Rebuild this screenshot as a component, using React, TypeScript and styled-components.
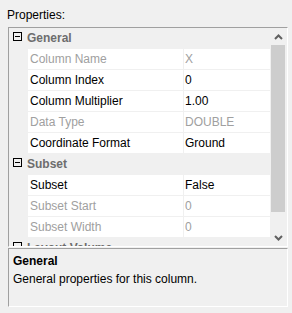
import React from 'react';
import styled, { createGlobalStyle } from 'styled-components';

const GlobalStyle = createGlobalStyle`
  html, body {
    margin: 0;
    padding: 0;
    background: #f0f0f0;
  }
  body {
    font-family: 'Liberation Sans', Arial, sans-serif;
    font-size: 12px;
    color: #000;
  }
`;

const Panel = styled.div`
  width: 292px;
  height: 313px;
  padding: 0 0 0 8px;
  box-sizing: border-box;
  display: flex;
  flex-direction: column;
`;

const Caption = styled.div`
  height: 27px;
  padding: 8px 0 0 0;
  margin-left: -1px;
  box-sizing: border-box;
  line-height: 15px;
`;

const Sunken = styled.div<{ $h: number }>`
  width: 280px;
  height: ${(p) => p.$h}px;
  box-sizing: border-box;
  border-top: 1px solid #a0a0a0;
  border-left: 1px solid #a0a0a0;
  border-right: 1px solid #fff;
  border-bottom: 1px solid #fff;
`;

const GridBox = styled(Sunken)`
  display: flex;
`;

const Rows = styled.div`
  width: 261px;
  height: 100%;
  overflow: hidden;
  display: flex;
  flex-direction: column;
`;

const CategoryRow = styled.div`
  height: 21px;
  flex-shrink: 0;
  display: flex;
  align-items: flex-start;
  background: #f0f0f0;
`;

const Toggle = styled.div`
  width: 9px;
  height: 9px;
  box-sizing: border-box;
  border: 1px solid #000;
  margin: 4px 5px 0 4px;
  position: relative;
  flex-shrink: 0;

  &::after {
    content: '';
    position: absolute;
    left: 1px;
    top: 3px;
    width: 5px;
    height: 1px;
    background: #000;
  }
`;

const CategoryLabel = styled.span`
  font-weight: bold;
  color: #6d6d6d;
  line-height: 20px;
  white-space: nowrap;
`;

const PropRow = styled.div`
  height: 21px;
  flex-shrink: 0;
  display: grid;
  grid-template-columns: 18px 155px 86px;
  column-gap: 1px;
  padding-right: 1px;
  border-bottom: 1px solid #f0f0f0;
  box-sizing: border-box;
  background: #f0f0f0;
`;

const Margin = styled.div`
  background: #f0f0f0;
`;

const Cell = styled.div<{ $off?: boolean; $pad: number }>`
  background: #fff;
  padding-left: ${(p) => p.$pad}px;
  line-height: 20px;
  white-space: nowrap;
  overflow: hidden;
  color: ${(p) => (p.$off ? '#a0a0a0' : '#000')};
`;

const ScrollBar = styled.div`
  width: 17px;
  height: 100%;
  background: #f0f0f0;
  display: flex;
  flex-direction: column;
`;

const ArrowBtn = styled.div`
  height: 17px;
  flex-shrink: 0;
  display: flex;
  align-items: center;
  justify-content: center;
`;

const Track = styled.div`
  flex: 1;
  display: flex;
  flex-direction: column;
`;

const Thumb = styled.div`
  height: 167px;
  width: 14px;
  margin-left: 1px;
  background: #cdcdcd;
`;

const Description = styled(Sunken)`
  margin-top: 1px;
  padding: 4px 0 0 4px;
`;

const DescTitle = styled.div`
  font-weight: bold;
  line-height: 16px;
`;

const DescText = styled.div`
  margin-top: 3px;
  line-height: 15px;
`;

const Chevron = ({ up }: { up?: boolean }) => (
  <svg width="9" height="6" viewBox="0 0 9 6">
    <polyline
      points={up ? '1,5 4.5,1.5 8,5' : '1,1 4.5,4.5 8,1'}
      fill="none"
      stroke="#606060"
      strokeWidth="2"
    />
  </svg>
);

type Prop = { name: string; value: string; off?: boolean };
type Category = { title: string; props: Prop[] };

const categories: Category[] = [
  {
    title: 'General',
    props: [
      { name: 'Column Name', value: 'X', off: true },
      { name: 'Column Index', value: '0' },
      { name: 'Column Multiplier', value: '1.00' },
      { name: 'Data Type', value: 'DOUBLE', off: true },
      { name: 'Coordinate Format', value: 'Ground' },
    ],
  },
  {
    title: 'Subset',
    props: [
      { name: 'Subset', value: 'False' },
      { name: 'Subset Start', value: '0', off: true },
      { name: 'Subset Width', value: '0', off: true },
    ],
  },
  { title: 'Layout Volume', props: [] },
];

export default function App() {
  return (
    <>
      <GlobalStyle />
      <Panel>
        <Caption>Properties:</Caption>
        <GridBox $h={220}>
          <Rows>
            {categories.map((c) => (
              <React.Fragment key={c.title}>
                <CategoryRow>
                  <Toggle />
                  <CategoryLabel>{c.title}</CategoryLabel>
                </CategoryRow>
                {c.props.map((p) => (
                  <PropRow key={p.name}>
                    <Margin />
                    <Cell $off={p.off} $pad={2}>{p.name}</Cell>
                    <Cell $off={p.off} $pad={1}>{p.value}</Cell>
                  </PropRow>
                ))}
              </React.Fragment>
            ))}
          </Rows>
          <ScrollBar>
            <ArrowBtn><Chevron up /></ArrowBtn>
            <Track><Thumb /></Track>
            <ArrowBtn><Chevron /></ArrowBtn>
          </ScrollBar>
        </GridBox>
        <Description $h={59}>
          <DescTitle>General</DescTitle>
          <DescText>General properties for this column.</DescText>
        </Description>
      </Panel>
    </>
  );
}
